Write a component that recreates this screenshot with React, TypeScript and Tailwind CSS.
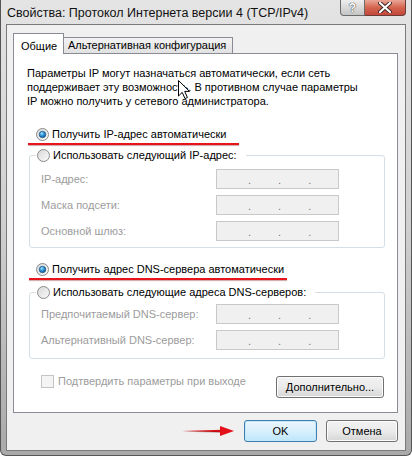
import { useId } from 'react'

function Radio({ checked }: { checked?: boolean }) {
  const id = useId().replace(/:/g, '')
  return (
    <svg width="13" height="13" viewBox="0 0 13 13" className="shrink-0">
      <defs>
        <linearGradient id={`rb${id}`} x1="0" y1="0" x2="1" y2="1">
          <stop offset="0" stopColor="#d7d7d7" />
          <stop offset="1" stopColor="#fbfbfb" />
        </linearGradient>
        <radialGradient id={`rd${id}`} cx="0.4" cy="0.35" r="0.7">
          <stop offset="0" stopColor="#9fe3ff" />
          <stop offset="0.5" stopColor="#2b8fd3" />
          <stop offset="1" stopColor="#0a4f8a" />
        </radialGradient>
      </defs>
      <circle cx="6.5" cy="6.5" r="6" fill={`url(#rb${id})`} stroke="#8a8a8a" strokeWidth="1" />
      {checked && <circle cx="6.5" cy="6.5" r="3.3" fill={`url(#rd${id})`} stroke="#1a4f7a" strokeWidth="0.6" />}
    </svg>
  )
}

function IpBox() {
  return (
    <div className="w-[123px] h-[20px] border border-[#c9c9c9] bg-[#f0f0f0] flex items-end pb-[2px] text-[#777] text-[11px] leading-none">
      <span className="ml-[31px]">.</span>
      <span className="ml-[27px]">.</span>
      <span className="ml-[27px]">.</span>
    </div>
  )
}

function Field({ label }: { label: string }) {
  return (
    <div className="flex items-center h-[20px]">
      <span className="w-[175px] text-[#9c9c9c]">{label}</span>
      <IpBox />
    </div>
  )
}

function Underline({ width }: { width: number }) {
  return <div className="h-[2px] bg-[#e8141b] shadow-[0_1px_1px_rgba(120,0,0,0.35)]" style={{ width }} />
}

function Button({ children, w, primary }: { children: React.ReactNode; w: string; primary?: boolean }) {
  return (
    <div
      className={
        primary
          ? `${w} h-[22px] rounded-[3px] border border-[#3c7fb1] bg-gradient-to-b from-[#eaf6fd] via-[#d9f0fc] to-[#bee6fd] shadow-[inset_0_0_0_1px_#c6e7fb] flex items-center justify-center`
          : `${w} h-[22px] rounded-[3px] border border-[#707070] bg-gradient-to-b from-[#f2f2f2] via-[#ebebeb] to-[#d6d6d6] shadow-[inset_0_0_0_1px_#fcfcfc] flex items-center justify-center`
      }
    >
      {children}
    </div>
  )
}

export default function App() {
  return (
    <div className="relative w-[412px] h-[456px] overflow-hidden font-['Liberation_Sans',Arial,sans-serif] text-[11px] text-black">
      <div className="flex flex-col h-[456px] border-l border-r border-b border-[#555] rounded-b-[6px] bg-gradient-to-b from-[#e4e4e4] via-[#cfcfcf] to-[#a9a9a9]">
        {/* title bar */}
        <div className="flex items-start h-[24px] shrink-0">
          <span className="pl-[6px] pt-[5px] text-[12.5px] leading-[16px] whitespace-nowrap text-[#111]">
            Свойства: Протокол Интернета версии 4 (TCP/IPv4)
          </span>
          <div className="ml-auto mr-[5px] flex">
            <div className="w-[25px] h-[16px] rounded-bl-[4px] border border-t-0 border-[#6b6b6b] bg-gradient-to-b from-[#eeeeee] to-[#c4c4c4] flex items-center justify-center">
              <span className="text-[12px] font-bold leading-none text-white [text-shadow:0_0_1px_#333,0_0_1px_#333]">?</span>
            </div>
            <div className="w-[41px] h-[16px] rounded-br-[4px] border border-t-0 border-l-0 border-[#6b3b36] bg-gradient-to-b from-[#e9a597] via-[#d4654f] to-[#c2463a] flex items-center justify-center">
              <svg width="14" height="11" viewBox="0 0 14 11">
                <path d="M2 1 L12 10 M12 1 L2 10" stroke="#3c2420" strokeWidth="4" strokeLinecap="round" />
                <path d="M2 1 L12 10 M12 1 L2 10" stroke="#ffffff" strokeWidth="2.2" strokeLinecap="round" />
              </svg>
            </div>
          </div>
        </div>

        {/* client area */}
        <div className="ml-[5px] w-[400px] flex-1 mb-[4px] border border-[#7a7a7a] bg-[#f0f0f0] pl-[6px] pr-[7px] pt-[8px] pb-[8px] flex flex-col">
          {/* tabs */}
          <div className="flex items-end h-[20px]">
            <div className="relative z-10 w-[51px] h-[21px] -mb-[1px] bg-white border border-b-0 border-[#898c95] pt-[4px] pl-[7px] whitespace-nowrap">
              Общие
            </div>
            <div className="-ml-[1px] w-[170px] h-[16px] border border-b-0 border-[#898c95] bg-gradient-to-b from-[#f3f3f3] to-[#e1e1e1] flex items-center pl-[4px] whitespace-nowrap">
              Альтернативная конфигурация
            </div>
          </div>

          {/* tab panel */}
          <div className="h-[360px] border border-[#898c95] bg-white flex flex-col">
            <p className="pl-[13px] pt-[12px] leading-[14px]">
              Параметры IP могут назначаться автоматически, если сеть
              <br />
              поддерживает эту возможность. В противном случае параметры
              <br />
              IP можно получить у сетевого администратора.
            </p>

            <div className="mt-[18px] h-[16px] flex items-center pl-[22px] gap-[3px]">
              <Radio checked />
              <span>Получить IP-адрес автоматически</span>
            </div>
            <div className="mt-[1px] ml-[14px]">
              <Underline width={211} />
            </div>

            <fieldset className="mt-[2px] ml-[15px] w-[356px] border border-[#d5dfe5] rounded-[3px] pl-[11px] pb-[6px]">
              <legend className="ml-[-5px] pl-[1px] pr-[9px]">
                <div className="h-[16px] flex items-center gap-[3px]">
                  <Radio />
                  <span>Использовать следующий IP-адрес:</span>
                </div>
              </legend>
              <div className="mt-[6px] flex flex-col gap-[6px]">
                <Field label="IP-адрес:" />
                <Field label="Маска подсети:" />
                <Field label="Основной шлюз:" />
              </div>
            </fieldset>

            <div className="mt-[13px] h-[16px] flex items-center pl-[22px] gap-[3px]">
              <Radio checked />
              <span>Получить адрес DNS-сервера автоматически</span>
            </div>
            <div className="mt-[1px] ml-[15px]">
              <Underline width={258} />
            </div>

            <fieldset className="mt-[4px] ml-[15px] w-[356px] border border-[#d5dfe5] rounded-[3px] pl-[11px] pb-[8px]">
              <legend className="ml-[-5px] pl-[1px] pr-[9px]">
                <div className="h-[16px] flex items-center gap-[3px]">
                  <Radio />
                  <span>Использовать следующие адреса DNS-серверов:</span>
                </div>
              </legend>
              <div className="mt-[4px] flex flex-col gap-[6px]">
                <Field label="Предпочитаемый DNS-сервер:" />
                <Field label="Альтернативный DNS-сервер:" />
              </div>
            </fieldset>

            <div className="mt-[17px] flex items-start pl-[27px] pr-[13px]">
              <div className="-mt-[1px] flex items-center gap-[4px] h-[13px]">
                <div className="w-[13px] h-[13px] border border-[#c4c4c4] bg-[#f4f4f4]" />
                <span className="text-[#9c9c9c]">Подтвердить параметры при выходе</span>
              </div>
              <div className="ml-auto">
                <Button w="w-[108px]">Дополнительно...</Button>
              </div>
            </div>
          </div>

          {/* dialog buttons */}
          <div className="mt-[7px] flex items-center justify-end gap-[9px]">
            <svg width="54" height="12" viewBox="0 0 54 12" className="mr-[-1px]">
              <path d="M0 6 L40 4.8 L40 7.2 Z" fill="#e3121a" />
              <path d="M0 6.5 L40 5.6 L40 8 Z" fill="rgba(90,0,0,0.25)" />
              <path d="M38 1 L52 6 L38 11 Z" fill="#e3121a" />
            </svg>
            <Button w="w-[73px]" primary>OK</Button>
            <Button w="w-[72px]">Отмена</Button>
          </div>
        </div>
      </div>

      {/* mouse pointer over the text */}
      <svg width="14" height="20" viewBox="0 0 14 20" className="absolute left-[178px] top-[80px]">
        <path d="M0.5 0.5 L0.5 16 L4.2 12.4 L7 18.6 L9.4 17.5 L6.7 11.4 L11.5 11.4 Z" fill="white" stroke="black" strokeWidth="1" strokeLinejoin="round" />
      </svg>
    </div>
  )
}
